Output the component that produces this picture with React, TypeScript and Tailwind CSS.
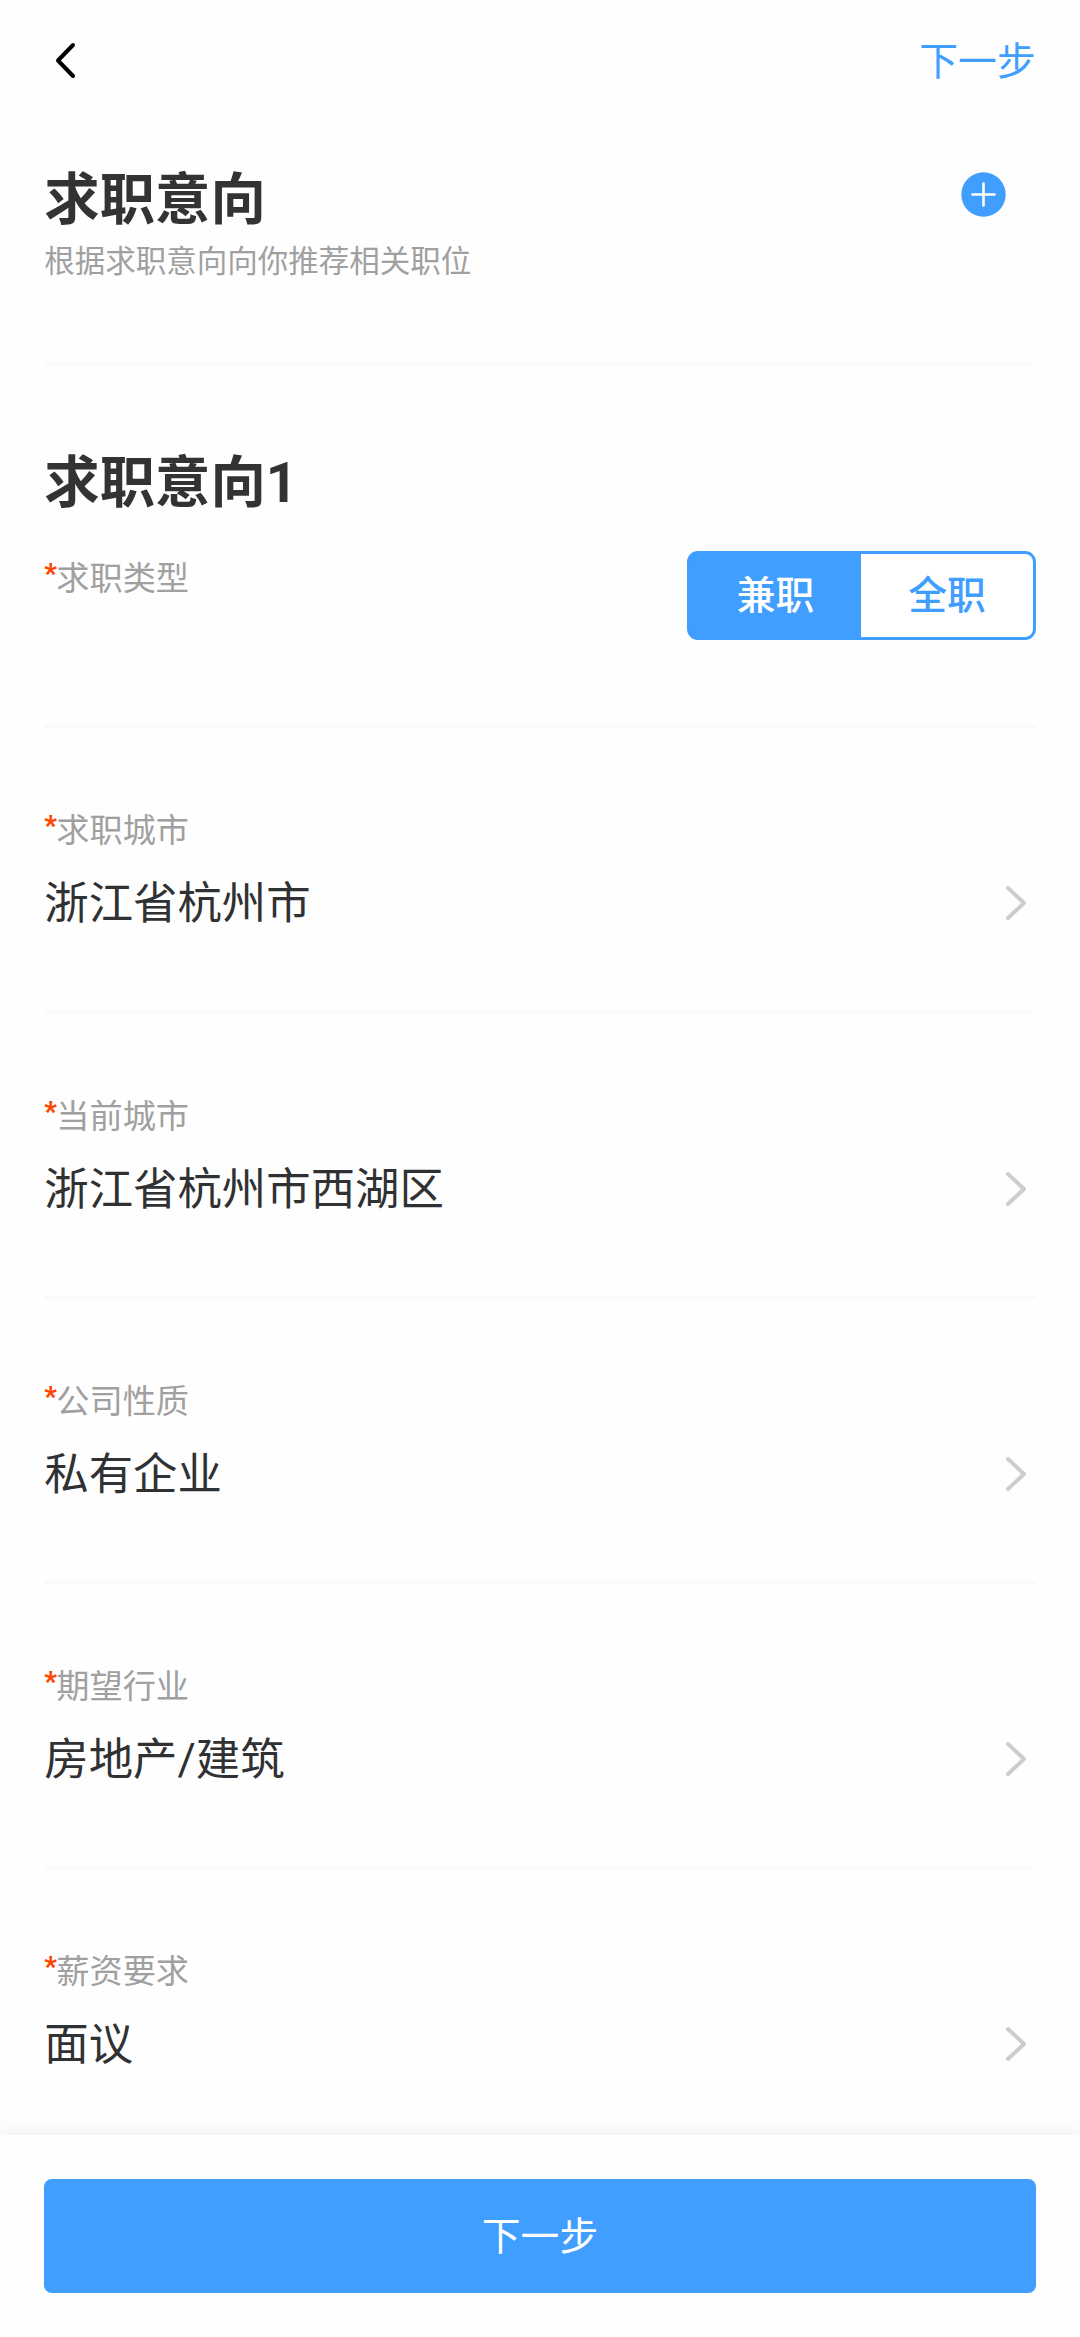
import { useState } from 'react';

interface FieldProps {
  label: string;
  value: string;
}

const fields: FieldProps[] = [
  { label: '求职城市', value: '浙江省杭州市' },
  { label: '当前城市', value: '浙江省杭州市西湖区' },
  { label: '公司性质', value: '私有企业' },
  { label: '期望行业', value: '房地产/建筑' },
  { label: '薪资要求', value: '面议' },
];

const jobTypes = ['兼职', '全职'];

function Label({ text }: { text: string }) {
  return (
    <div className="flex text-[33.2px] leading-[34px] text-[#a0a0a0]">
      <span className="-mt-[5px] w-[12px] text-[27px] font-black text-[#ff4500]">*</span>
      <span>{text}</span>
    </div>
  );
}

function Field({ label, value }: FieldProps) {
  return (
    <div className="h-[285.2px] shrink-0 border-b-3 border-[#fafafa] pt-[86px]">
      <Label text={label} />
      <div className="mt-[33px] flex items-center justify-between">
        <span className="pt-[2px] text-[44.4px] leading-[42px] text-[#303133]">{value}</span>
        <svg className="mr-[8px] h-[36px] w-[24px]" viewBox="0 0 24 36" fill="none">
          <path
            d="M4 3 L20 18 L4 33"
            stroke="#cdcdcd"
            strokeWidth="4"
            strokeLinecap="round"
            strokeLinejoin="round"
          />
        </svg>
      </div>
    </div>
  );
}

export default function App() {
  const [jobType, setJobType] = useState('兼职');

  return (
    <div className="flex h-[2337px] w-[1080px] flex-col overflow-hidden bg-[#fefefe] font-['Roboto','Noto_Sans_CJK_SC',sans-serif]">
      {/* Nav bar */}
      <header className="flex h-[122px] shrink-0 items-center justify-between px-[44.3px]">
        <button>
          <svg className="ml-[10px] h-[38px] w-[24px]" viewBox="0 0 24 38" fill="none">
            <path
              d="M19 3 L4 18.5 L19 34"
              stroke="#000"
              strokeWidth="4"
              strokeLinecap="round"
              strokeLinejoin="round"
            />
          </svg>
        </button>
        <button className="pt-[2px] text-[38.8px] leading-[40px] text-[#409eff]">下一步</button>
      </header>

      <main className="flex min-h-0 flex-1 flex-col overflow-hidden px-[44.3px]">
        {/* Page title */}
        <div className="flex h-[244px] shrink-0 justify-between border-b-3 border-[#fafafa] pt-[50px]">
          <div className="pt-px">
            <h1 className="text-[55.4px] leading-[56px] font-bold text-[#333]">求职意向</h1>
            <p className="mt-[18px] text-[30.5px] leading-[30px] text-[#a0a0a0]">
              根据求职意向向你推荐相关职位
            </p>
          </div>
          <button className="mr-[30px] h-[45px]">
            <svg className="size-[45px]" viewBox="0 0 45 45">
              <circle cx="22.5" cy="22.5" r="22.2" fill="#409eff" />
              <path d="M22.5 11.5 V33.5 M11.5 22.5 H33.5" stroke="#fff" strokeWidth="2.6" strokeLinecap="round" />
            </svg>
          </button>
        </div>

        {/* Job type */}
        <div className="h-[362.4px] shrink-0 border-b-3 border-[#fafafa] pt-[90px]">
          <h2 className="text-[55.4px] leading-[56px] font-bold text-[#333]">求职意向1</h2>
          <div className="mt-[39px] flex justify-between">
            <div className="pt-[11px]">
              <Label text="求职类型" />
            </div>
            <div className="flex h-[89px] w-[349px] overflow-hidden rounded-[11px] border-3 border-[#409eff] bg-[#409eff]">
              {jobTypes.map((type) => (
                <button
                  key={type}
                  onClick={() => setJobType(type)}
                  className={`flex-1 text-[38.8px] leading-[40px] font-medium ${
                    type === jobType ? 'bg-[#409eff] text-white' : 'bg-white text-[#409eff]'
                  }`}
                >
                  {type}
                </button>
              ))}
            </div>
          </div>
        </div>

        {fields.map((field) => (
          <Field key={field.label} {...field} />
        ))}
      </main>

      {/* Bottom action */}
      <footer className="z-10 h-[202px] shrink-0 bg-[#fefefe] px-[44.3px] pt-[44px] shadow-[0_0_17px_rgba(0,0,0,0.08)]">
        <button className="h-[114px] w-full rounded-[8px] bg-[#409eff] pt-[2px] text-[38.8px] leading-[40px] text-white">
          下一步
        </button>
      </footer>
    </div>
  );
}
